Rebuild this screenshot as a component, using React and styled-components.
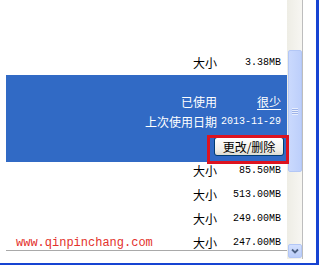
import React from 'react';
import styled, { createGlobalStyle } from 'styled-components';

const Global = createGlobalStyle`
  html, body {
    margin: 0;
    padding: 0;
    width: 319px;
    height: 265px;
    overflow: hidden;
    background: #fff;
  }
`;

const cjk = `"Noto Sans CJK SC", "Noto Sans", sans-serif`;
const mono = `"Liberation Mono", "DejaVu Sans Mono", monospace`;

// window frame: XP blue border on the right and bottom
const Window = styled.div`
  position: relative;
  box-sizing: border-box;
  width: 319px;
  height: 265px;
  padding-left: 6px;
  background: #fff;
  border-right: 3px solid #1744d2;
  border-bottom: 2px solid #1744d2;
`;

const Frame = styled.div`
  display: flex;
  width: 298px;
  height: 259px;
`;

const List = styled.div`
  width: 281px;
  display: flex;
  flex-direction: column;
`;

const Items = styled.div`
  height: 250px;
  overflow: hidden;
  border-bottom: 1px solid #a9a9a9;
  display: flex;
  flex-direction: column;
`;

const Spacer = styled.div`
  height: ${p => p.$h}px;
  flex: none;
`;

const Pair = styled.div`
  display: grid;
  grid-template-columns: auto 60px;
  column-gap: 4px;
  justify-content: end;
  justify-items: end;
  align-items: center;
`;

const Row = styled(Pair)`
  flex: none;
  height: 24px;
  padding-right: 6px;
  margin-top: ${p => p.$shift || 0}px;
  color: #000;
`;

const Label = styled.span`
  font-family: ${cjk};
  font-size: 12px;
  line-height: 14px;
`;

const Value = styled.span`
  font-family: ${mono};
  font-size: 10px;
  line-height: 14px;
  white-space: nowrap;
`;

const LinkValue = styled(Label)`
  text-decoration: underline;
  text-underline-offset: 2px;
`;

const Selected = styled.div`
  flex: none;
  box-sizing: border-box;
  height: 87px;
  padding: 17px 3px 0 0;
  background: #316ac5;
  color: #fff;
  display: flex;
  flex-direction: column;
  align-items: flex-end;
`;

const Details = styled(Pair)`
  grid-auto-rows: 20px;
  margin-right: 3px;
`;

const XpButton = styled.button`
  margin-top: 5px;
  box-sizing: border-box;
  width: 70px;
  height: 19px;
  padding: 0;
  border: 1px solid #003c74;
  border-radius: 3px;
  background: linear-gradient(#ffffff, #f0efe9 70%, #dcdad0);
  color: #000;
  font-family: ${cjk};
  font-size: 12px;
  line-height: 15px;
`;

const Scrollbar = styled.div`
  width: 16px;
  height: 259px;
  box-sizing: border-box;
  border-right: 1px solid #bdbdbd;
  background: linear-gradient(90deg, #eeede5, #f7f6f2);
  display: flex;
  flex-direction: column;
  align-items: center;
`;

const Thumb = styled.div`
  margin-top: 50px;
  box-sizing: border-box;
  width: 14px;
  height: 122px;
  border: 1px solid #b3c7f6;
  border-radius: 2px;
  background: linear-gradient(90deg, #cad9fd, #bdcffb);
  display: flex;
  align-items: center;
  justify-content: center;
`;

const Grip = styled.div`
  width: 6px;
  height: 7px;
  background: repeating-linear-gradient(#e8eefd 0 1px, #9db3e8 1px 2px);
`;

const ArrowButton = styled.div`
  margin-top: auto;
  margin-bottom: 1px;
  box-sizing: border-box;
  width: 14px;
  height: 14px;
  border: 1px solid #b3c7f6;
  border-radius: 2px;
  background: linear-gradient(#d3e0fe, #bbcdf9);
  display: flex;
  align-items: center;
  justify-content: center;
`;

const Watermark = styled.div`
  position: absolute;
  left: 16px;
  top: 236px;
  font-family: ${mono};
  font-size: 12px;
  line-height: 14px;
  color: #e3312c;
`;

const Highlight = styled.div`
  position: absolute;
  left: 207px;
  top: 135px;
  width: 82px;
  height: 29px;
  box-sizing: border-box;
  border: 3px solid #dd1320;
`;

const sizes = ['85.50MB', '513.00MB', '249.00MB', '247.00MB'];

export default function App() {
  return (
    <>
      <Global />
      <Window>
        <Frame>
          <List>
            <Items>
              <Spacer $h={51} />
              <Row>
                <Label>大小</Label>
                <Value>3.38MB</Value>
              </Row>
              <Selected>
                <Details>
                  <Label>已使用</Label>
                  <LinkValue>很少</LinkValue>
                  <Label>上次使用日期</Label>
                  <Value>2013-11-29</Value>
                </Details>
                <XpButton>更改/删除</XpButton>
              </Selected>
              {sizes.map((s, i) => (
                <Row key={s} $shift={i === 0 ? -3 : 0}>
                  <Label>大小</Label>
                  <Value>{s}</Value>
                </Row>
              ))}
            </Items>
          </List>
          <Scrollbar>
            <Thumb>
              <Grip />
            </Thumb>
            <ArrowButton>
              <svg width="8" height="6" viewBox="0 0 8 6">
                <path d="M1 1.5 L4 4.5 L7 1.5" fill="none" stroke="#4d6185" strokeWidth="1.8" />
              </svg>
            </ArrowButton>
          </Scrollbar>
        </Frame>
        <Watermark>www.qinpinchang.com</Watermark>
        <Highlight />
      </Window>
    </>
  );
}
